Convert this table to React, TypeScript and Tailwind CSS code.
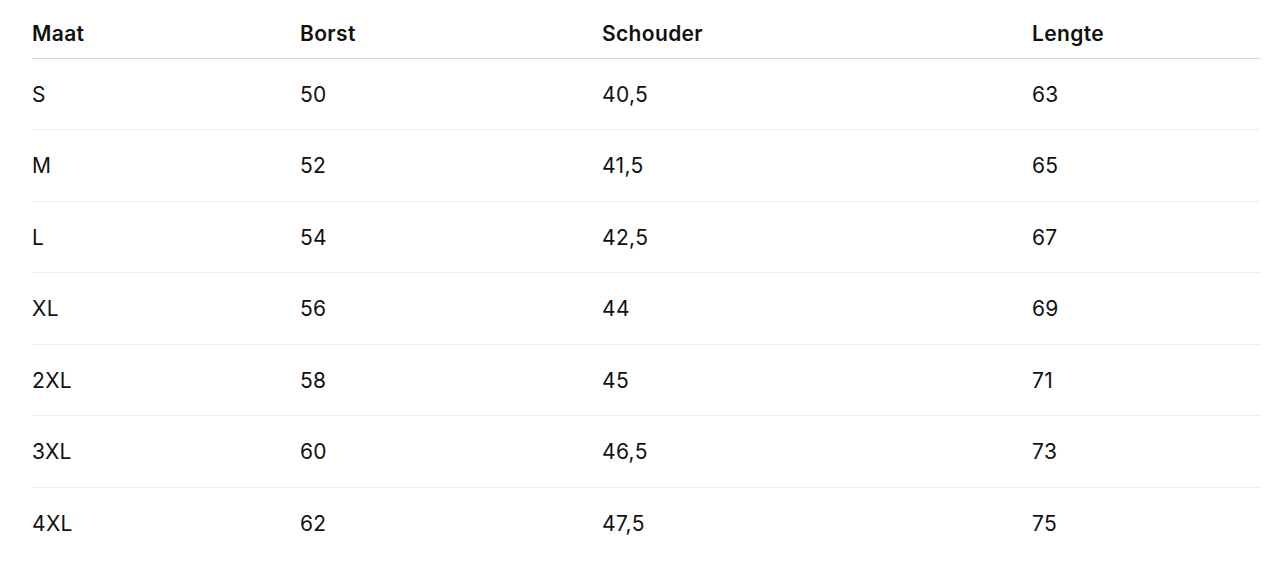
import React from "react";

const rows = [
  ["S", "50", "40,5", "63"],
  ["M", "52", "41,5", "65"],
  ["L", "54", "42,5", "67"],
  ["XL", "56", "44", "69"],
  ["2XL", "58", "45", "71"],
  ["3XL", "60", "46,5", "73"],
  ["4XL", "62", "47,5", "75"],
];

export default function App() {
  return (
    <div className="min-h-[572px] bg-white pl-8 pr-[26px] pt-[8px] font-['Inter','Noto_Sans',sans-serif] text-[#111111]">
      <table className="w-full table-fixed border-collapse text-left text-[21px] tracking-[0.35px]">
        <colgroup>
          <col className="w-[268px]" />
          <col className="w-[302px]" />
          <col className="w-[430px]" />
          <col className="w-[228px]" />
        </colgroup>
        <thead>
          <tr className="border-b border-[#d6d6d6]">
            <th className="h-[50px] p-0 pt-[2px] align-middle font-semibold leading-7">Maat</th>
            <th className="h-[50px] p-0 pt-[2px] align-middle font-semibold leading-7">Borst</th>
            <th className="h-[50px] p-0 pt-[2px] align-middle font-semibold leading-7">Schouder</th>
            <th className="h-[50px] p-0 pt-[2px] align-middle font-semibold leading-7">Lengte</th>
          </tr>
        </thead>
        <tbody>
          {rows.map((r, i) => (
            <tr
              key={r[0]}
              className={i < rows.length - 1 ? "border-b border-[#eeeeee]" : ""}
            >
              {r.map((c, j) => (
                <td key={j} className="h-[71.5px] p-0 pt-[2px] align-middle leading-7 font-normal">
                  {c}
                </td>
              ))}
            </tr>
          ))}
        </tbody>
      </table>
    </div>
  );
}
